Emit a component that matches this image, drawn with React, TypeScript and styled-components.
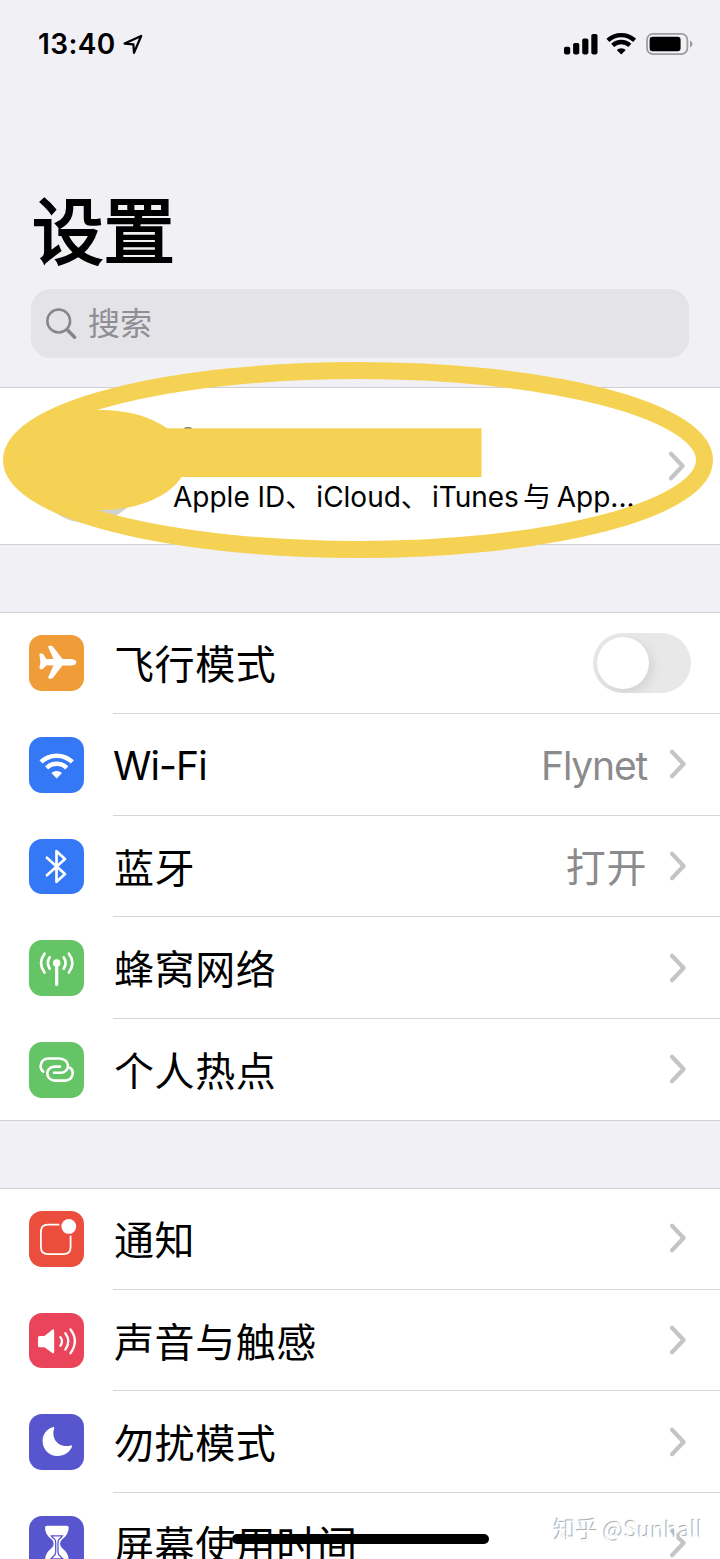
import React from "react";
import styled, { createGlobalStyle } from "styled-components";

const GlobalStyle = createGlobalStyle`
  * { box-sizing: border-box; }
  html, body { margin: 0; padding: 0; }
  body {
    background: #f1f0f5;
    font-family: Inter, "Noto Sans CJK SC", sans-serif;
    color: #000;
    overflow: hidden;
  }
`;

const Screen = styled.main`
  position: relative;
  width: 720px;
  height: 1559px;
  overflow: hidden;
  display: flex;
  flex-direction: column;
  background: #f1f0f5;
`;

const StatusBar = styled.header`
  display: flex;
  align-items: center;
  justify-content: space-between;
  height: 88px;
  padding: 0 27px 0 38px;
  flex: none;
`;

const Clock = styled.div`
  display: flex;
  align-items: center;
  gap: 7px;
  font-size: 28px;
  font-weight: 600;
  line-height: 34px;
`;

const Title = styled.h1`
  margin: 0;
  height: 201px;
  padding: 94px 0 0 32px;
  font-size: 71.5px;
  font-weight: 400;
  -webkit-text-stroke: 2.2px #000;
  line-height: 100px;
  flex: none;
`;

const SearchField = styled.div`
  display: flex;
  align-items: center;
  gap: 11px;
  height: 69px;
  margin: 0 31px 29px;
  padding-left: 15px;
  border-radius: 20px;
  background: #e4e3e8;
  color: #8f8e94;
  font-size: 32px;
  line-height: 40px;
  flex: none;
`;

const Group = styled.section`
  flex: none;
  background: #fff;
  box-shadow: inset 0 1px #d0d0d3, inset 0 -1px #d0d0d3;
  margin-bottom: 67.4px;
`;

const Profile = styled.div`
  display: flex;
  align-items: center;
  height: 158px;
  padding: 0 33px 0 31px;
`;

const Avatar = styled.div`
  width: 114px;
  height: 114px;
  border-radius: 50%;
  background: #d1d1cf;
  flex: none;
`;

const ProfileText = styled.div`
  flex: 1;
  margin-left: 28px;
  padding-top: 61px;
  font-size: 28px;
  line-height: 36px;
  white-space: nowrap;
`;

const Latin = styled.span<{ $spacing?: number }>`
  letter-spacing: ${(p) => p.$spacing ?? 0}px;
`;

const Comma = styled.span`
  margin-right: 3px;
`;

const Conjunction = styled.span`
  margin: 0 -2px 0 4px;
`;

const Row = styled.div`
  display: flex;
  align-items: center;
  height: 101.67px;
  padding-left: 28.7px;
`;

const Tile = styled.div<{ $color: string }>`
  width: 55.6px;
  height: 55.6px;
  border-radius: 13px;
  background: ${(p) => p.$color};
  flex: none;
  svg { display: block; }
`;

const RowBody = styled.div<{ $last?: boolean; $end: number }>`
  flex: 1;
  display: flex;
  align-items: center;
  align-self: stretch;
  margin-left: 28.7px;
  padding-right: ${(p) => p.$end}px;
  border-bottom: 1px solid ${(p) => (p.$last ? "transparent" : "#d6d6d9")};
`;

const Label = styled.span<{ $latin?: boolean }>`
  flex: 1;
  padding: ${(p) => (p.$latin ? "3px 0 0" : "5px 0 0 1px")};
  font-size: ${(p) => (p.$latin ? 39 : 40)}px;
  letter-spacing: ${(p) => (p.$latin ? -0.9 : 0.6)}px;
  line-height: 56px;
  white-space: nowrap;
`;

const Value = styled.span<{ $latin?: boolean }>`
  padding-top: ${(p) => (p.$latin ? 3 : 4)}px;
  margin-right: 21px;
  color: #8b8b8d;
  font-size: ${(p) => (p.$latin ? 39 : 40)}px;
  letter-spacing: ${(p) => (p.$latin ? -1.2 : 0.6)}px;
  line-height: 56px;
`;

const Switch = styled.div`
  width: 98px;
  height: 60px;
  padding: 4px;
  border-radius: 30px;
  background: #e8e8e8;
  overflow: hidden;
`;

const Knob = styled.div`
  width: 52px;
  height: 52px;
  border-radius: 50%;
  background: #fff;
  box-shadow: 3px 4px 12px rgba(0, 0, 0, 0.1);
`;

const Markup = styled.svg`
  position: absolute;
  left: 0;
  top: 355px;
`;

const HomeIndicator = styled.div`
  position: absolute;
  left: 232px;
  top: 1534px;
  width: 257px;
  height: 9.5px;
  border-radius: 5px;
  background: #000;
`;

const Watermark = styled.div`
  position: absolute;
  left: 554px;
  top: 1512px;
  font-family: "Noto Sans CJK SC", sans-serif;
  font-size: 22.2px;
  line-height: 32px;
  white-space: nowrap;
  color: #fff;
  text-shadow: -1px -1px 1px #a4a4a4;
`;

const Chevron = () => (
  <svg width="20" height="32" viewBox="0 0 20 32" fill="none">
    <path d="M4 3.8 15.6 16 4 28.2" stroke="#c5c5c7" strokeWidth="4.2" strokeLinecap="round" strokeLinejoin="round" />
  </svg>
);

const WifiArcs = ({ color, weight }: { color: string; weight: number }) => (
  <>
    <g fill="none" stroke={color} strokeWidth={weight}>
      <path d="M12 24.9a23 23 0 0 1 31.4 0" />
      <path d="M17.6 30.8a14.7 14.7 0 0 1 20.2 0" />
    </g>
    <path d="M27.7 41.4 22.4 36.1a8 8 0 0 1 10.6 0Z" fill={color} />
  </>
);

const stroke = {
  fill: "none",
  stroke: "#fff",
  strokeLinecap: "round" as const,
  strokeLinejoin: "round" as const,
};

const glyphs: Record<string, React.ReactNode> = {
  plane: (
    <path
      fill="#fff"
      d="M10.4 19.6Q10.4 18.5 11.5 18.5H12.8Q13.8 18.5 14.5 19.4L17.6 24.2L24.5 23.8L19.3 12.4Q18.9 10.7 20.5 10.7H21.8Q23.1 10.8 24 11.8L33.5 23.9H42.5Q47.3 24.4 47.3 27.2T42.5 30.5H33.5L24 42.7Q23.1 43.7 21.8 43.7H20.5Q18.9 43.7 19.3 42L24.5 30.6L17.6 30.2L14.5 33.3Q13.8 34.2 12.8 34.2H11.5Q10.4 34.2 10.4 33.1L11.4 27Z"
    />
  ),
  wifi: <WifiArcs color="#fff" weight={4.5} />,
  bluetooth: <path {...stroke} strokeWidth="2.7" d="M17.9 18.8 36 35.1 27.5 42.8V12.2L36 20 17.9 36.2" />,
  cellular: (
    <g {...stroke} strokeWidth="2.7">
      <path d="M27.7 24v20.5" strokeWidth="3.2" />
      <circle cx="27.7" cy="23" r="3.8" fill="#fff" stroke="none" />
      <path d="M20.7 17.3q-3.7 5.8 0 11.4M34.7 17.3q3.7 5.8 0 11.4M15.5 13.7q-7 9.3 0 18.8M39.9 13.7q7 9.3 0 18.8" />
    </g>
  ),
  hotspot: (
    <g {...stroke} strokeWidth="2.6">
      <path d="M14.2 29.6C9.6 25.6 11.3 16.5 20 16.5H30C41.8 16.5 41.8 30.8 31 30.8H25" />
      <path d="M41.2 25.8C45.8 29.8 44.1 38.6 35.4 38.6H26.5C15.8 38.6 15.8 24.6 25.6 24.6H31" />
    </g>
  ),
  notice: (
    <>
      <path {...stroke} strokeWidth="1.8" d="M29.6 13.7H19Q11.9 13.7 11.9 20.8V36Q11.9 43.1 19 43.1H34.5Q41.6 43.1 41.6 36V25.4" />
      <circle cx="39.8" cy="15.4" r="7.4" fill="#fff" />
    </>
  ),
  sound: (
    <>
      <path fill="#fff" d="M10.5 23H15.5L23.2 16.7Q25.2 15.6 25.2 18V38.8Q25.2 41.2 23.2 40.1L15.5 34.2H10.5Q9 34.2 9 32.7V24.5Q9 23 10.5 23Z" />
      <g {...stroke} strokeWidth="2.3">
        <path d="M31.4 24.1q3.3 4.2 0 8.6M36.3 20.2q6 8 0 16.4M41.5 16.5q8.8 11.5 0 23.7" />
      </g>
    </>
  ),
  moon: (
    <path
      fill="#fff"
      d="M24 13.1C17.2 15.2 13.6 21 13.6 27.2C13.6 35.5 20.2 42 28.5 42C35.4 42 41 38.2 43 32.6Q43.4 31 41.8 31.4C31 34.6 21.5 25.5 25.2 14.4Q25.5 12.8 24 13.1Z"
    />
  ),
  hourglass: (
    <>
      <path
        fill="#fff"
        d="M18 9.7H37.7Q39.7 9.7 39.7 11.7Q39.5 18.5 33.5 23Q31 25 31 27.7T33.5 32.4Q39.5 37 39.7 43.7Q39.7 45.7 37.7 45.7H18Q16 45.7 16 43.7Q16.2 37 22.2 32.4Q24.7 30.4 24.7 27.7T22.2 23Q16.2 18.5 16 11.7Q16 9.7 18 9.7Z"
      />
      <path fill="none" stroke="#5856ce" strokeWidth="1.3" d="M22.4 19.8H33.3Q32 21.8 30.2 23Q29 24 29 27V36Q29 38.5 31 40L34 43H21.7L24.7 40Q26.7 38.5 26.7 36V27Q26.7 24 25.5 23Q23.7 21.8 22.4 19.8Z" />
    </>
  ),
};

interface Item {
  icon: string;
  color: string;
  label: string;
  value?: string;
  toggle?: boolean;
}

const connectivity: Item[] = [
  { icon: "plane", color: "#f09c38", label: "飞行模式", toggle: true },
  { icon: "wifi", color: "#3478f6", label: "Wi-Fi", value: "Flynet" },
  { icon: "bluetooth", color: "#3478f6", label: "蓝牙", value: "打开" },
  { icon: "cellular", color: "#65c466", label: "蜂窝网络" },
  { icon: "hotspot", color: "#65c466", label: "个人热点" },
];

const attention: Item[] = [
  { icon: "notice", color: "#eb4e3d", label: "通知" },
  { icon: "sound", color: "#ea445a", label: "声音与触感" },
  { icon: "moon", color: "#5856ce", label: "勿扰模式" },
  { icon: "hourglass", color: "#5856ce", label: "屏幕使用时间" },
];

const isLatin = (s: string) => /^[\x00-\x7f]+$/.test(s);

const SettingsGroup = ({ items }: { items: Item[] }) => (
  <Group>
    {items.map((item, i) => (
      <Row key={item.label}>
        <Tile $color={item.color}>
          <svg width="55.6" height="55.6" viewBox="0 0 55.6 55.6">{glyphs[item.icon]}</svg>
        </Tile>
        <RowBody $last={i === items.length - 1} $end={item.toggle ? 29 : 32}>
          <Label $latin={isLatin(item.label)}>{item.label}</Label>
          {item.value && <Value $latin={isLatin(item.value)}>{item.value}</Value>}
          {item.toggle ? <Switch><Knob /></Switch> : <Chevron />}
        </RowBody>
      </Row>
    ))}
  </Group>
);

const App = () => (
  <>
    <GlobalStyle />
    <Screen>
      <StatusBar>
        <Clock>
          <Latin $spacing={0.4}>13:40</Latin>
          <svg width="20" height="21" viewBox="0 0 20 21" fill="none">
            <path d="M1.6 9.6 18.2 2 11 18.8 10.4 10.4Z" stroke="#000" strokeWidth="2.2" strokeLinejoin="round" />
          </svg>
        </Clock>
        <svg width="130" height="24" viewBox="563 32 130 24">
          <rect x="564" y="46.7" width="6.2" height="7.7" rx="1.8" />
          <rect x="573.1" y="43" width="6.2" height="11.4" rx="1.8" />
          <rect x="582.2" y="38.5" width="6.2" height="15.9" rx="1.8" />
          <rect x="591.3" y="34" width="6.2" height="20.4" rx="1.8" />
          <g transform="translate(597.7 19.2) scale(0.85)">
            <WifiArcs color="#000" weight={5.2} />
          </g>
          <rect x="647" y="33.9" width="40.4" height="20.2" rx="6" fill="none" stroke="#9d9da0" strokeWidth="1.8" />
          <rect x="649.6" y="36.7" width="31" height="14.6" rx="3.2" />
          <path d="M690 40.4Q692.6 41.5 692.6 44T690 47.6Z" fill="#9d9da0" />
        </svg>
      </StatusBar>

      <Title>设置</Title>

      <SearchField>
        <svg width="31" height="32" viewBox="0 0 31 32" fill="none" stroke="#86858a" strokeLinecap="round">
          <circle cx="12.7" cy="13" r="11.4" strokeWidth="2.5" />
          <path d="M21 21.5 28.6 29.3" strokeWidth="3.4" />
        </svg>
        <span>搜索</span>
      </SearchField>

      <Group>
        <Profile>
          <Avatar />
          <ProfileText>
            <Latin>Apple ID</Latin><Comma>、</Comma><Latin>iCloud</Latin><Comma>、</Comma><Latin>iTunes</Latin><Conjunction>与</Conjunction> <Latin>App...</Latin>
          </ProfileText>
          <Chevron />
        </Profile>
      </Group>

      <SettingsGroup items={connectivity} />
      <SettingsGroup items={attention} />

      <Markup width="720" height="210" viewBox="0 355 720 210">
        <ellipse cx="188" cy="428.6" rx="4" ry="1.4" fill="#555" />
        <ellipse cx="358" cy="460" rx="346.5" ry="89.5" fill="none" stroke="#f6d254" strokeWidth="17" />
        <ellipse cx="101.5" cy="460" rx="85" ry="50" fill="#f6d254" />
        <rect x="150" y="428.3" width="331.5" height="48.7" fill="#f6d254" />
      </Markup>
      <HomeIndicator />
      <Watermark>知乎 @Sunhall</Watermark>
    </Screen>
  </>
);

export default App;
